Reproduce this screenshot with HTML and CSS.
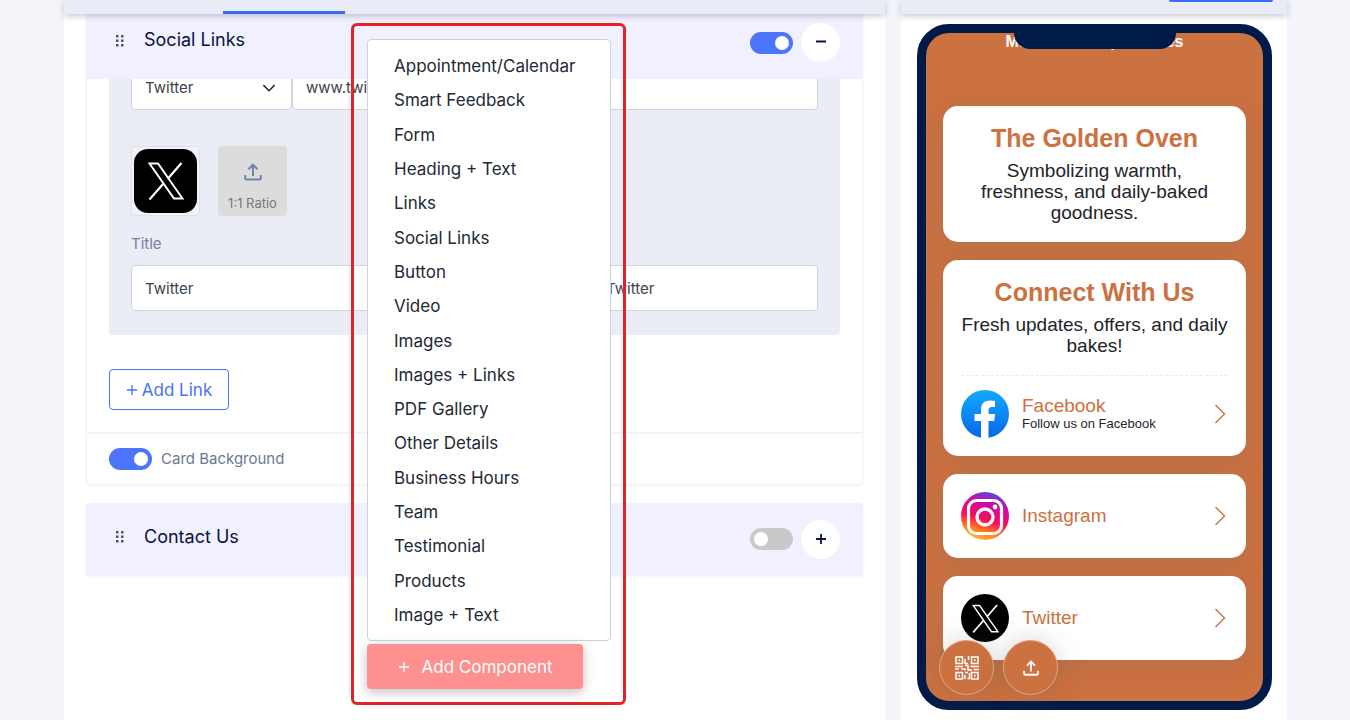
FILE: index.html
```html
<!DOCTYPE html>
<html lang="en">
<head>
<meta charset="utf-8">
<title>Page components</title>
<meta name="viewport" content="width=device-width, initial-scale=1">
<link rel="stylesheet" href="styles.css">
</head>
<body>
<svg class="defs" aria-hidden="true">
  <defs>
    <linearGradient id="fb" x1="0" y1="0" x2="0" y2="1"><stop offset="0" stop-color="#12aaff"/><stop offset="1" stop-color="#0866e6"/></linearGradient>
    <linearGradient id="ig" x1="0.3" y1="1" x2="0.6" y2="0"><stop offset="0" stop-color="#ffc13d"/><stop offset="0.22" stop-color="#ff7a1a"/><stop offset="0.45" stop-color="#fb0a5c"/><stop offset="0.72" stop-color="#d5089a"/><stop offset="1" stop-color="#5a45e0"/></linearGradient>
    <symbol id="x-logo" viewBox="0 0 36 38"><path d="M1.500 1.500h8.500l24.500 35h-8.500z" fill="none" stroke="currentColor" stroke-width="2"/><path d="M33.500 1 20 16.500M15.500 21.500 1.500 37.500" fill="none" stroke="currentColor" stroke-width="2.200"/></symbol>
    <symbol id="upload" viewBox="0 0 18 18"><path d="M9 13V2M4.500 6.200 9 1.700l4.500 4.500M1.200 12v3.300q0 1.300 1.300 1.300h13q1.300 0 1.300-1.300V12" fill="none" stroke="currentColor" stroke-width="2"/></symbol>
    <symbol id="chevron" viewBox="0 0 12 20"><path d="m1.500 1 9 9-9 9" fill="none" stroke="currentColor" stroke-width="1.400"/></symbol>
    <symbol id="grip" viewBox="0 0 8 12"><path d="M0 0h2.500v2.500H0zM5 0h2.500v2.500H5zM0 4.500h2.500V7H0zM5 4.500h2.500V7H5zM0 9h2.500v2.500H0zM5 9h2.500v2.500H5z" fill="#4b5567"/></symbol>
  </defs>
</svg>
<div class="page">
  <main class="panel editor">
    <div class="bar"><span class="bar-tab"></span></div>
    <div class="cards">
      <section class="card">
        <header class="card-head">
          <svg class="grip"><use href="#grip"/></svg>
          <h2 class="card-title">Social Links</h2>
          <input class="switch" type="checkbox" checked aria-label="Show Social Links">
          <button class="round-btn" type="button" aria-label="Collapse"><svg width="12" height="12" viewBox="0 0 12 12"><path d="M1 5.500h10" stroke="#081245" stroke-width="2"/></svg></button>
        </header>
        <div class="card-body">
          <div class="link-box">
            <div class="link-row">
              <div class="select-wrap">
                <select class="field" aria-label="Network"><option>Twitter</option></select>
                <svg class="caret" viewBox="0 0 12 8"><path d="m1 1 5 5 5-5" fill="none" stroke="#222b38" stroke-width="1.300"/></svg>
              </div>
              <input class="field" type="text" value="www.twitter.com" aria-label="Address">
            </div>
            <div class="icon-row">
              <div class="icon-frame"><div class="icon-tile"><svg width="36" height="38"><use href="#x-logo"/></svg></div></div>
              <button class="upload-tile" type="button"><svg width="18" height="18"><use href="#upload"/></svg><span>1:1 Ratio</span></button>
            </div>
            <div class="title-row">
              <div class="title-col"><label for="link-title">Title</label><input id="link-title" class="field" type="text" value="Twitter"></div>
              <input class="field" type="text" value="Twitter" aria-label="Sub title">
            </div>
          </div>
          <button class="add-link" type="button"><svg width="12" height="12" viewBox="0 0 12 12"><path d="M6 1v10M1 6h10" stroke="currentColor" stroke-width="1.300"/></svg>Add Link</button>
        </div>
        <footer class="card-foot">
          <input id="card-bg" class="switch" type="checkbox" checked>
          <label for="card-bg">Card Background</label>
        </footer>
      </section>
      <section class="card closed">
        <header class="card-head">
          <svg class="grip"><use href="#grip"/></svg>
          <h2 class="card-title">Contact Us</h2>
          <input class="switch" type="checkbox" aria-label="Show Contact Us">
          <button class="round-btn" type="button" aria-label="Expand"><svg width="12" height="12" viewBox="0 0 12 12"><path d="M6 1v10M1 6h10" stroke="#081245" stroke-width="1.800"/></svg></button>
        </header>
      </section>
    </div>
    <div class="highlight">
      <ul class="menu">
        <li>Appointment/Calendar</li><li>Smart Feedback</li><li>Form</li><li>Heading + Text</li><li>Links</li><li>Social Links</li><li>Button</li><li>Video</li><li>Images</li><li>Images + Links</li><li>PDF Gallery</li><li>Other Details</li><li>Business Hours</li><li>Team</li><li>Testimonial</li><li>Products</li><li>Image + Text</li>
      </ul>
      <button class="add-component" type="button"><svg width="12" height="12" viewBox="0 0 12 12"><path d="M6 1v10M1 6h10" stroke="currentColor" stroke-width="1.500"/></svg>Add Component</button>
    </div>
  </main>
  <aside class="panel preview">
    <div class="bar"><span class="bar-action"></span></div>
    <div class="phone">
      <div class="notch"></div>
      <p class="phone-top">Made-Fresh Specialties</p>
      <section class="tile intro">
        <h3>The Golden Oven</h3>
        <p>Symbolizing warmth, freshness, and daily-baked goodness.</p>
      </section>
      <section class="tile">
        <h3>Connect With Us</h3>
        <p>Fresh updates, offers, and daily bakes!</p>
        <a class="social divided" href="#">
          <svg class="logo" viewBox="0 0 48 48"><circle cx="24" cy="24" r="24" fill="url(#fb)"/><path d="M20 47.700V31h-6.500v-7H20v-4.500C20 13.500 23.500 10.500 29 10.500c2.500 0 5 .4 5 .4v6h-3c-2.700 0-3.500 1.600-3.500 3.400V24h6.700l-1.100 7h-5.600v16.700q-3.700.5-7.500 0z" fill="#fff"/></svg>
          <span class="social-text"><strong>Facebook</strong><small>Follow us on Facebook</small></span>
          <svg class="chevron"><use href="#chevron"/></svg>
        </a>
      </section>
      <section class="tile">
        <a class="social" href="#">
          <svg class="logo" viewBox="0 0 48 48"><circle cx="24" cy="24" r="24" fill="url(#ig)"/><rect x="7.500" y="8.500" width="33" height="33" rx="8" fill="none" stroke="#fff" stroke-width="3.200"/><circle cx="24" cy="25" r="8" fill="none" stroke="#fff" stroke-width="3.400"/><circle cx="34" cy="15" r="2.400" fill="#fff"/></svg>
          <span class="social-text"><strong>Instagram</strong></span>
          <svg class="chevron"><use href="#chevron"/></svg>
        </a>
      </section>
      <section class="tile">
        <a class="social" href="#">
          <svg class="logo" viewBox="0 0 48 48"><circle cx="24" cy="24" r="24" fill="#000"/><use href="#x-logo" x="11" y="10" width="27" height="29" color="#fff"/></svg>
          <span class="social-text"><strong>Twitter</strong></span>
          <svg class="chevron"><use href="#chevron"/></svg>
        </a>
      </section>
      <div class="floating">
        <button class="float-btn" type="button" aria-label="QR code"><svg width="24" height="24" viewBox="0 0 24 24" fill="none" stroke="#fff" stroke-width="1.500"><path d="M1 1h6.500v6.500H1zM16.500 1H23v6.500h-6.500zM1 16.500h6.500V23H1z M16.500 16.500H23V23h-6.500z"/><path d="M3.500 4.200h1.500M19 4.200h1.500M3.500 19.800h1.500M19 19.800h1.500" stroke-width="2"/><path d="M10 3v4.500h3M13.500 0v4M10 9.500h3v4.500h4M0 10.500h8M0 13h4M6 13h4v1.500M15.500 10.500H24M18.500 13.500H24M10 16.500h3M10 19v4M12.500 22.500h2V17"/></svg></button>
        <button class="float-btn" type="button" aria-label="Share"><svg width="16" height="16"><use href="#upload"/></svg></button>
      </div>
    </div>
  </aside>
</div>
</body>
</html>
```

FILE: styles.css
```css
* { box-sizing: border-box; }
body {
  margin: 0;
  background: #f4f5fb;
  color: #212934;
  font-family: Inter, "Open Sans", sans-serif;
  font-size: 15px;
}
button, input, select { font: inherit; color: inherit; margin: 0; }
button { padding: 0; border: 0; cursor: pointer; }
h2, h3, p, ul { margin: 0; padding: 0; }
ul { list-style: none; }
.defs { position: absolute; width: 0; height: 0; }

.page {
  display: grid;
  grid-template-columns: 1fr 386px;
  gap: 16px;
  min-height: 100vh;
  padding: 0 63px 0 64px;
}
.panel { position: relative; background: #fff; }
.bar {
  position: relative;
  z-index: 2;
  display: flex;
  align-items: flex-end;
  height: 14px;
  background: #e9ecf6;
  box-shadow: 0 2px 6px rgba(60, 60, 80, 0.28);
}
.bar-tab { width: 122px; height: 3px; margin-left: 159px; background: #3b6cf8; }
.bar-action { align-self: flex-start; width: 104px; height: 2px; margin: 0 14px 0 auto; background: #3b6cf8; border-radius: 0 0 3px 3px; }

.cards { display: flex; flex-direction: column; gap: 18px; padding: 0 22px; }
.card {
  overflow: hidden;
  border: 1px solid #f1f2f6;
  border-top: 0;
  border-radius: 0 0 4px 4px;
  box-shadow: 0 1px 3px rgba(0, 0, 0, 0.05);
}
.card.closed { border-radius: 4px; }
.card-head {
  position: relative;
  z-index: 1;
  display: flex;
  align-items: center;
  height: 65px;
  padding: 0 22px 8px 29px;
  background: #f1f0ff;
}
.closed .card-head { height: 72px; padding-bottom: 0; }
.grip { width: 8px; height: 12px; margin-top: -4px; }
.card-title {
  margin: -6px auto 0 20px;
  color: #081245;
  font-size: 18px;
  font-weight: 400;
}
.switch {
  appearance: none;
  display: flex;
  width: 43px;
  height: 22px;
  padding: 4px;
  border-radius: 11px;
  background: #c9c9c9;
}
.switch::before { content: ""; width: 14px; height: 14px; border-radius: 50%; background: #fff; }
.switch:checked { justify-content: flex-end; background: #4c75fb; }
.round-btn { width: 39px; height: 39px; margin-left: 8px; border-radius: 50%; background: #fff; }

.card-body { padding: 0 22px 22px; }
.link-box {
  margin-top: -15px;
  padding: 0 22px 24px;
  border-radius: 0 0 4px 4px;
  background: #eaecf6;
}
.field {
  width: 100%;
  height: 46px;
  padding: 0 13px;
  border: 1px solid #d0d3dc;
  border-radius: 4px;
  background: #fff;
  color: #3a424e;
  font-size: 15px;
}
.link-row { display: flex; align-items: flex-start; }
.select-wrap { position: relative; flex: 0 0 161px; }
.select-wrap .field { appearance: none; }
.caret { position: absolute; right: 16px; top: 20px; width: 14px; height: 9px; }
.icon-row { display: flex; gap: 18px; margin-top: 36px; }
.icon-frame { padding: 2px; border: 1px solid #dfe0e6; border-radius: 4px; background: #f2f3fa; }
.icon-tile {
  display: grid;
  place-items: center;
  width: 63px;
  height: 64px;
  border-radius: 14px;
  background: #000;
  color: #fff;
}
.upload-tile {
  display: flex;
  flex-direction: column;
  align-items: center;
  justify-content: flex-end;
  gap: 14px;
  width: 69px;
  padding-bottom: 5px;
  border-radius: 4px;
  background: #dcdcdc;
  color: #7282a6;
  font-size: 13px;
}
.upload-tile span { color: #77797f; line-height: 16px; }
.title-row { display: flex; align-items: flex-end; gap: 20px; margin-top: 18px; }
.title-row > .field { flex: 0 0 226px; }
.title-col { display: flex; flex: 1; flex-direction: column; gap: 11px; color: #7781a0; font-size: 15px; line-height: 20px; }
.add-link {
  display: flex;
  align-items: center;
  justify-content: center;
  gap: 4px;
  width: 120px;
  height: 41px;
  margin-top: 34px;
  border: 1px solid #4672f8;
  border-radius: 4px;
  background: #fff;
  color: #4672f8;
  font-size: 17px;
}
.card-foot {
  display: flex;
  align-items: center;
  gap: 9px;
  padding: 14px 22px;
  border-top: 2px solid #f1f2fa;
  color: #6c7693;
  line-height: 22px;
}

.highlight {
  position: absolute;
  z-index: 3;
  top: 23px;
  left: 287px;
  display: flex;
  flex-direction: column;
  gap: 3px;
  width: 275px;
  height: 682px;
  padding: 13px 12px 13px 13px;
  border: 3px solid #e32227;
  border-radius: 6px;
}
.menu {
  display: flex;
  flex: 1;
  flex-direction: column;
  justify-content: space-between;
  padding: 14px 26px 13px;
  border: 1px solid #cfd1d8;
  border-radius: 4px;
  background: #fff;
  font-size: 17px;
  line-height: 24px;
}
.add-component {
  display: flex;
  align-items: center;
  justify-content: center;
  gap: 12px;
  width: 216px;
  height: 45px;
  border-radius: 4px;
  background: #ff9090;
  box-shadow: 0 3px 12px rgba(0, 0, 0, 0.25);
  color: #fff;
  font-size: 17px;
}

.preview { font-family: "Liberation Sans", Arial, sans-serif; }
.phone {
  position: relative;
  display: flex;
  flex-direction: column;
  gap: 18px;
  margin: 10px 15px 10px 16px;
  padding: 0 17px 41px;
  border: 9px solid #001a47;
  border-radius: 32px;
  background: #cc7140;
}
.notch {
  position: absolute;
  top: 0;
  left: 50%;
  width: 162px;
  height: 16px;
  margin-left: -81px;
  border-radius: 0 0 18px 18px;
  background: #001a47;
}
.phone-top { height: 55px; color: #fff; font-size: 16px; font-weight: 700; line-height: 18px; text-align: center; }
.tile {
  padding: 18px;
  border-radius: 15px;
  background: #fff;
  box-shadow: 0 4px 22px rgba(110, 110, 110, 0.25);
  color: #212529;
  font-size: 19px;
  line-height: 21px;
  text-align: center;
}
.tile h3 { margin-bottom: 8px; color: #cc7140; font-size: 25px; line-height: 28px; }
.tile.intro { padding-bottom: 19px; }
.social { display: flex; align-items: center; color: #cc7140; text-align: left; text-decoration: none; }
.divided { margin-top: 19px; padding-top: 14px; border-top: 1px dashed #e8e9f0; }
.logo { width: 48px; height: 48px; }
.social-text { display: flex; flex: 1; flex-direction: column; margin-left: 13px; }
.social-text strong { font-size: 19px; font-weight: 400; line-height: 20px; }
.social-text small { color: #212529; font-size: 13px; line-height: 16px; }
.chevron { width: 12px; height: 20px; margin-right: 2px; }
.floating { position: absolute; bottom: 6px; left: 13px; display: flex; gap: 9px; }
.float-btn {
  display: grid;
  place-items: center;
  width: 55px;
  height: 55px;
  border: 1px solid #e2a585;
  border-radius: 50%;
  background: #cc7140;
  box-shadow: 0 0 24px rgba(90, 90, 90, 0.25);
  color: #fff;
}
```
